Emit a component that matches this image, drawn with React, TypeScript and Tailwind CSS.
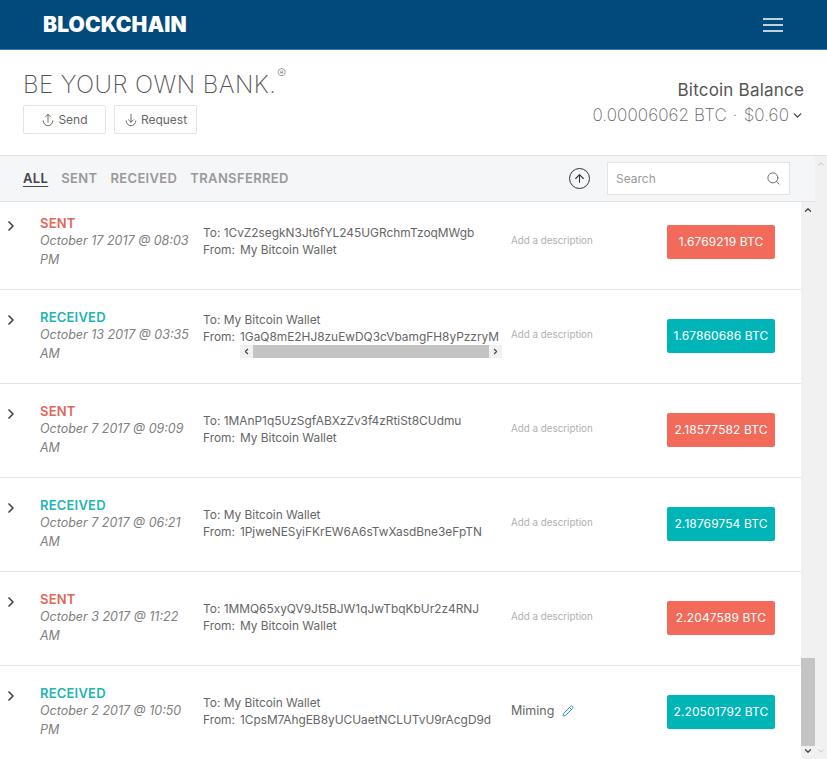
import { ArrowUp, ChevronDown, ChevronRight, Pencil, Search } from "lucide-react";
import React from "react";

const font = "font-['Inter','Liberation_Sans',sans-serif]";

const rows = [
  { type: "SENT", date: "October 17 2017 @ 08:03 PM", to: "1CvZ2segkN3Jt6fYL245UGRchmTzoqMWgb", from: "My Bitcoin Wallet", amount: "1.6769219 BTC" },
  { type: "RECEIVED", date: "October 13 2017 @ 03:35 AM", to: "My Bitcoin Wallet", from: "1GaQ8mE2HJ8zuEwDQ3cVbamgFH8yPzzryM", amount: "1.67860686 BTC", scroll: true },
  { type: "SENT", date: "October 7 2017 @ 09:09 AM", to: "1MAnP1q5UzSgfABXzZv3f4zRtiSt8CUdmu", from: "My Bitcoin Wallet", amount: "2.18577582 BTC" },
  { type: "RECEIVED", date: "October 7 2017 @ 06:21 AM", to: "My Bitcoin Wallet", from: "1PjweNESyiFKrEW6A6sTwXasdBne3eFpTN", amount: "2.18769754 BTC" },
  { type: "SENT", date: "October 3 2017 @ 11:22 AM", to: "1MMQ65xyQV9Jt5BJW1qJwTbqKbUr2z4RNJ", from: "My Bitcoin Wallet", amount: "2.2047589 BTC" },
  { type: "RECEIVED", date: "October 2 2017 @ 10:50 PM", to: "My Bitcoin Wallet", from: "1CpsM7AhgEB8yUCUaetNCLUTvU9rAcgD9d", amount: "2.20501792 BTC", note: "Miming" },
];

// arc with an arrow through it, the send / request glyph
const ArcArrow = ({ down = false }: { down?: boolean }) => (
  <svg viewBox="0 0 16 16" className="w-[14px] h-[14px]" fill="none" stroke="currentColor" strokeWidth="1.1" strokeLinecap="round" strokeLinejoin="round">
    <path d="M2.5 9a5.5 5.5 0 0 0 11 0" />
    {down ? <path d="M8 1.5v9M5.2 7.8 8 10.6l2.8-2.8" /> : <path d="M8 10.6v-9M5.2 4.3 8 1.5l2.8 2.8" />}
  </svg>
);

const Row = ({ row }: { row: (typeof rows)[number] }) => {
  const sent = row.type === "SENT";
  return (
    <div className="flex h-[94px] shrink-0 border-b border-[#e3e3e3]">
      <div className="w-[40px] pt-[22px] pl-[3px]">
        <ChevronRight size={16} strokeWidth={2.5} className="text-[#444]" />
      </div>
      <div className="w-[163px] pt-[19px] pr-[12px]">
        <div className={`text-[13px] leading-[16px] font-semibold tracking-[0.2px] ${sent ? "text-[#e0675a]" : "text-[#1fb5b5]"}`}>{row.type}</div>
        <div className="text-[12.5px] leading-[19px] italic text-[#808080]">{row.date}</div>
      </div>
      <div className={`w-[300px] text-[11.9px] leading-[17px] text-[#666] whitespace-nowrap ${row.scroll ? "pt-[21px]" : "pt-[28px]"}`}>
        <div>To: {row.to}</div>
        <div className="flex">
          <span className="mr-[5px]">From:</span>
          <span className="block w-[262px] overflow-hidden">{row.from}</span>
        </div>
        {row.scroll && (
          <div className="flex items-center justify-between ml-[37px] w-[262px] h-[13px] bg-[#f1f1f1]">
            <ChevronRight size={9} strokeWidth={3} className="rotate-180 text-[#444] mx-[2px]" />
            <div className="flex-1 h-full bg-[#c4c4c4]" />
            <ChevronRight size={9} strokeWidth={3} className="text-[#444] mx-[2px]" />
          </div>
        )}
      </div>
      <div className="w-[164px] pl-[8px] pt-[37px] whitespace-nowrap">
        {row.note ? (
          <div className="flex items-center gap-[8px] text-[12.5px] leading-[16px] text-[#666]">
            {row.note}
            <Pencil size={12} className="text-[#2f93d1]" />
          </div>
        ) : (
          <div className="text-[9.8px] leading-[16px] text-[#b0b0b0]">Add a description</div>
        )}
      </div>
      <div className="pt-[29px]">
        <div className={`w-[108px] h-[34px] rounded-[2px] flex items-center justify-center text-[12px] tracking-[0.1px] text-white ${sent ? "bg-[#f26a5a]" : "bg-[#00b5b8]"}`}>
          {row.amount}
        </div>
      </div>
    </div>
  );
};

const ScrollBar = ({ width, thumb }: { width: string; thumb?: boolean }) => (
  <div className={`${width} bg-[#f1f1f1] shrink-0 flex flex-col items-center justify-between py-[3px]`}>
    <ChevronDown size={10} strokeWidth={thumb ? 3 : 1.5} className={`rotate-180 ${thumb ? "text-[#444]" : "text-[#aaa]"}`} />
    {thumb && <div className="w-full h-[88px] mt-auto bg-[#c4c4c4]" />}
    <ChevronDown size={10} strokeWidth={thumb ? 3 : 1.5} className={thumb ? "text-[#444]" : "text-[#aaa]"} />
  </div>
);

export default function App() {
  return (
    <div className={`${font} w-[827px] h-[759px] overflow-hidden flex flex-col bg-white`}>
      <header className="h-[50px] shrink-0 bg-[#004a7c] border-b border-[#3a7ca5] flex items-center justify-between pl-[43px] pr-[44px]">
        <span className="text-white text-[21px] font-black tracking-[0.1px]">BLOCKCHAIN</span>
        <svg viewBox="0 0 20 14" className="w-[20px] h-[14px]" stroke="white" strokeWidth="1.6">
          <path d="M0 1h20M0 7h20M0 13h20" />
        </svg>
      </header>

      <div className="h-[106px] shrink-0 border-b border-[#dfe1e4] flex justify-between px-[23px]">
        <div>
          <div className="pt-[20px] text-[24px] leading-[30px] font-extralight tracking-[0.45px] text-[#555] whitespace-nowrap">
            BE YOUR OWN BANK.<sup className="text-[13px] ml-[1px] align-super">®</sup>
          </div>
          <div className="flex gap-[8px] mt-[5px]">
            <button className="w-[83px] h-[29px] border border-[#e3e3e3] rounded-[2px] flex items-center justify-center gap-[3px] text-[12px] text-[#666]">
              <ArcArrow />
              Send
            </button>
            <button className="w-[83px] h-[29px] border border-[#e3e3e3] rounded-[2px] flex items-center justify-center gap-[3px] text-[12px] text-[#666]">
              <ArcArrow down />
              Request
            </button>
          </div>
        </div>
        <div className="pt-[29px] text-right">
          <div className="text-[17px] leading-[22px] tracking-[0.2px] text-[#555]">Bitcoin Balance</div>
          <div className="flex items-center mt-[1px] text-[17px] leading-[26px] font-extralight tracking-[0.1px] text-[#666]">
            0.00006062 BTC<span className="mx-[6px]">·</span>$0.60
            <ChevronDown size={13} strokeWidth={2.5} className="ml-[2px] text-[#444]" />
          </div>
        </div>
      </div>

      <div className="flex-1 flex min-h-0">
        <div className="flex-1 flex flex-col min-w-0">
          <div className="h-[46px] shrink-0 bg-[#f5f6f8] border-b border-[#dfe1e4] flex items-center pl-[23px] pr-[25px] text-[13px] font-semibold tracking-[0.35px] text-[#999]">
            <span className="text-[#444] underline underline-offset-[3px]">ALL</span>
            <span className="ml-[13px]">SENT</span>
            <span className="ml-[13px]">RECEIVED</span>
            <span className="ml-[13px]">TRANSFERRED</span>
            <div className="ml-auto w-[21px] h-[21px] rounded-full border-[1.5px] border-[#333] flex items-center justify-center">
              <ArrowUp size={13} className="text-[#333]" />
            </div>
            <div className="ml-[17px] w-[183px] h-[33px] bg-white border border-[#e3e3e3] flex items-center justify-between px-[8px] text-[12px] font-normal tracking-normal text-[#999]">
              Search
              <Search size={15} strokeWidth={1.5} className="text-[#666]" />
            </div>
          </div>
          <div className="flex-1 flex min-h-0 overflow-hidden">
            <div className="flex-1 min-w-0 overflow-hidden">
              <div className="-mt-[6px]">
                {rows.map((r) => (
                  <Row key={r.amount} row={r} />
                ))}
              </div>
            </div>
            <ScrollBar width="w-[14px]" thumb />
          </div>
        </div>
        <ScrollBar width="w-[12px]" />
      </div>
    </div>
  );
}
